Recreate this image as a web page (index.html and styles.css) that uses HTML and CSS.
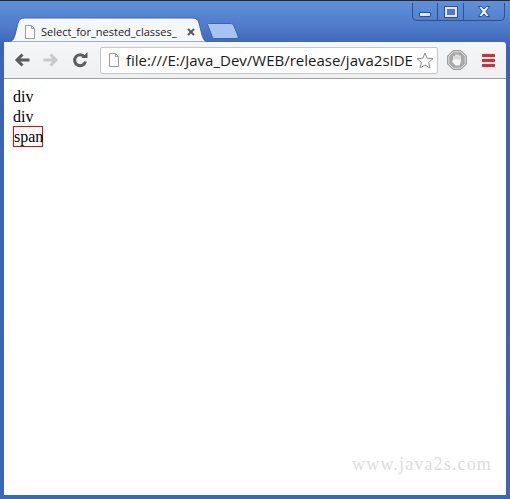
FILE: index.html
```html
<!DOCTYPE html>
<html lang="en">
<head>
    <meta charset="UTF-8">
    <title>Select_for_nested_classes_</title>
    <link rel="stylesheet" href="styles.css">
</head>
<body>
    <div class="window">
        <div class="controls">
            <div class="ctl ctl-min"><span class="min-bar"></span></div>
            <div class="ctl ctl-max"><span class="max-box"></span></div>
            <div class="ctl ctl-close">
                <svg width="14" height="11" viewBox="0 0 14 11"><path d="M1.500.500h3.200L7 3l2.300-2.500h3.200L9 5.500l3.500 5H9.300L7 8l-2.300 2.500H1.500L5 5.500z" fill="#e4ecf8" stroke="#2c4f8f" stroke-width="1"/></svg>
            </div>
        </div>

        <div class="tabstrip">
            <div class="tab">
                <svg class="tab-shape" width="200" height="25" viewBox="0 0 200 25">
                    <path d="M0 25C4 25 6 22 7 18L10 6C11 2.500 13 1 17 1H184C188 1 190 2.500 191 6L194 18C195 22 197 25 200 25Z" fill="#f6f7f9" stroke="#3f64a8" stroke-width="1"/>
                </svg>
                <svg class="page-icon" width="12" height="14" viewBox="0 0 12 14">
                    <path d="M1.500.500H7.500L10.500 3.500V13.500H1.500Z M7.500.500V3.500H10.500" fill="#fff" stroke="#9a9a9a"/>
                </svg>
                <span class="tab-title">Select_for_nested_classes_</span>
                <svg class="tab-close" width="8" height="8" viewBox="0 0 8 8"><path d="M1 1l6 6M7 1l-6 6" stroke="#5a5a5a" stroke-width="2"/></svg>
            </div>
            <svg class="new-tab" width="32" height="16" viewBox="0 0 32 16">
                <path d="M.500 1.500C.500 1 1 .500 2 .500H23C25 .500 26 1 27 3L31 13C31.500 15 31 15.500 29 15.500H8C6 15.500 5.500 15 5 13Z" fill="#a6c4f0" stroke="#3f64a8"/>
            </svg>
        </div>

        <div class="toolbar">
            <svg class="nav-icon" width="16" height="14" viewBox="0 0 16 14"><path d="M15.500 7H3.500M8.500 1.500L3 7l5.500 5.500" fill="none" stroke="#5c5c5c" stroke-width="3"/></svg>
            <svg class="nav-icon" width="16" height="14" viewBox="0 0 16 14"><path d="M.500 7H12.500M7.500 1.500L13 7l-5.500 5.500" fill="none" stroke="#c9c9c9" stroke-width="3"/></svg>
            <svg class="nav-icon" width="16" height="16" viewBox="0 0 16 16"><path d="M12.500 4.800A5.500 5.500 0 1 0 13.500 9.500" fill="none" stroke="#5c5c5c" stroke-width="3"/><path d="M9.500 6H15.500V0Z" fill="#5c5c5c"/></svg>

            <div class="omnibox">
                <svg class="page-icon" width="12" height="14" viewBox="0 0 12 14">
                    <path d="M1.500.500H7.500L10.500 3.500V13.500H1.500Z M7.500.500V3.500H10.500" fill="#fff" stroke="#9a9a9a"/>
                </svg>
                <span class="url">file:///E:/Java_Dev/WEB/release/java2sIDE</span>
                <svg class="star" width="18" height="17" viewBox="0 0 18 17"><path d="M9 1l2.200 5.300 5.800.400-4.400 3.700 1.400 5.600L9 13l-5 3 1.400-5.600L1 6.700l5.800-.400Z" fill="#fff" stroke="#8a8a8a"/></svg>
            </div>

            <svg class="stop-icon" width="20" height="20" viewBox="0 0 20 20">
                <path d="M6 .500H14L19.500 6V14L14 19.500H6L.500 14V6Z" fill="#a8a8a8" stroke="#a0a0a0"/>
                <path d="M6.300 1.800H13.700L18.200 6.300V13.700L13.700 18.200H6.300L1.800 13.700V6.300Z" fill="none" stroke="#dedede"/>
                <path d="M7 10V6.500M9 10V4.800M11 10V4.800M13 10V6" fill="none" stroke="#f6f6f6" stroke-width="1.300" stroke-linecap="round"/>
                <path d="M6.300 9.500H13.700V12L12.500 15.500H8.500L5 11.500 5.600 10.500Z" fill="#f6f6f6"/>
            </svg>
            <div class="menu-icon"><span></span><span></span><span></span></div>
        </div>

        <div class="page">
            <div>div</div>
            <div>div</div>
            <div class="boxed">span</div>
            <div class="watermark">www.java2s.com</div>
        </div>
    </div>
</body>
</html>
```

FILE: styles.css
```css
* {
    margin: 0;
    padding: 0;
    box-sizing: border-box;
}

body {
    width: 510px;
    height: 499px;
    overflow: hidden;
    background: #fff;
}

.window {
    position: relative;
    width: 510px;
    height: 499px;
    display: flex;
    flex-direction: column;
    padding: 2px 4px 4px 4px;
    border-top: 1px solid #2a2a2a;
    background: linear-gradient(to bottom, #5f90da 0, #4f7ccb 25px, #3c64b4 45px, #3c66b8 100%);
}

.controls {
    position: absolute;
    top: 2px;
    right: 5px;
    width: 93px;
    height: 18px;
    display: flex;
    border: 1px solid #2f4f8f;
    border-top: 0;
    border-radius: 0 0 5px 5px;
}

.ctl {
    display: flex;
    align-items: center;
    justify-content: center;
    border-right: 1px solid #2f4f8f;
}

.ctl-min { width: 25px; }
.ctl-max { width: 26px; }
.ctl-close { flex: 1; border-right: 0; }

.min-bar {
    width: 12px;
    height: 5px;
    margin-top: 6px;
    background: #dfe7f5;
    border: 1px solid #2c4f8f;
    border-radius: 1px;
}

.max-box {
    width: 12px;
    height: 10px;
    border: 2px solid #dfe7f5;
    box-shadow: 0 0 0 1px #2c4f8f;
    background: #4f7bc6;
}

.tabstrip {
    height: 39px;
    display: flex;
    align-items: flex-end;
    flex-shrink: 0;
}

.tab {
    position: relative;
    width: 200px;
    height: 25px;
    margin-left: 4px;
    padding: 4px 0 0 16px;
    display: flex;
    align-items: center;
}

.tab-shape {
    position: absolute;
    left: 0;
    top: 0;
}

.tab .page-icon,
.tab-title,
.tab-close {
    position: relative;
}

.tab-title {
    width: 138px;
    margin-left: 5px;
    font-family: 'Open Sans', sans-serif;
    font-size: 11px;
    white-space: nowrap;
    color: #222;
}

.tab-close {
    margin-left: 8px;
}

.new-tab {
    margin: 0 0 3px -1px;
}

.toolbar {
    height: 37px;
    flex-shrink: 0;
    display: flex;
    align-items: center;
    background: linear-gradient(to bottom, #f5f6f8, #eff0f2);
    border-bottom: 1px solid #a0a0a0;
    border-radius: 0 3px 0 0;
    padding: 0 0 0 10px;
}

.nav-icon {
    margin-right: 13px;
}

.omnibox {
    width: 338px;
    height: 27px;
    margin-left: -1px;
    display: flex;
    align-items: center;
    padding: 0 3px 0 7px;
    background: #fff;
    border: 1px solid #c6c6c6;
    border-radius: 2px;
}

.url {
    width: 286px;
    margin-left: 6px;
    font-family: 'Open Sans', sans-serif;
    font-size: 15px;
    white-space: nowrap;
    color: #1a1a1a;
}

.star {
    margin-left: auto;
}

.stop-icon {
    margin-left: 9px;
}

.menu-icon {
    margin-left: 15px;
    width: 13px;
    display: flex;
    flex-direction: column;
    gap: 2px;
}

.menu-icon span {
    height: 3px;
    background: #e02c2c;
}

.page {
    position: relative;
    flex: 1;
    padding: 8px 9px;
    background: #fff;
    font-family: 'Liberation Serif', serif;
    font-size: 16px;
    line-height: 20px;
    color: #000;
}

.boxed {
    width: 30px;
    height: 21px;
    margin-top: -1px;
    border: 1px solid red;
    line-height: 19px;
    white-space: nowrap;
}

.watermark {
    position: absolute;
    right: 14px;
    bottom: 21px;
    font-size: 18px;
    letter-spacing: 1.150px;
    color: #ddd;
}
```
